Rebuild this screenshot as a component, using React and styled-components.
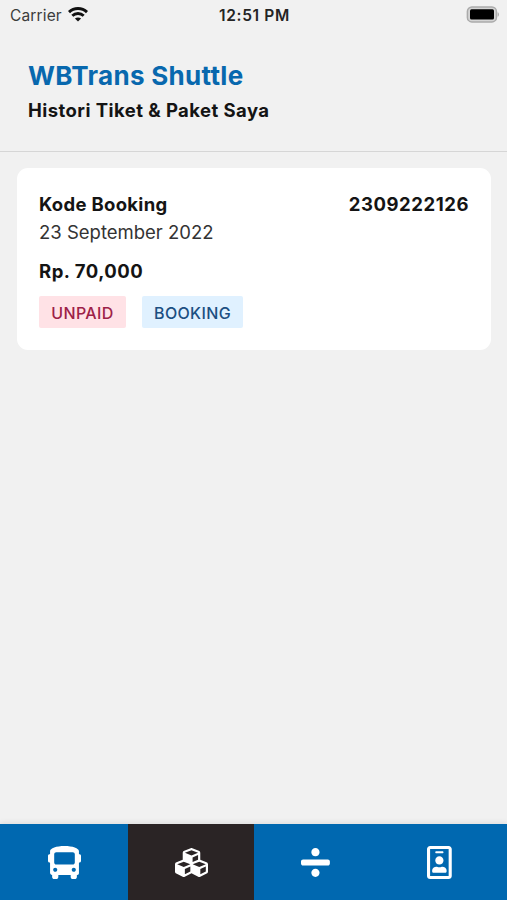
import React from "react";
import styled, { createGlobalStyle } from "styled-components";
import { FaBus, FaCubes, FaDivide, FaRegIdBadge } from "react-icons/fa";

const GlobalStyle = createGlobalStyle`
  * { box-sizing: border-box; }
  body {
    margin: 0;
    background: #f1f1f1;
    font-family: Inter, "Liberation Sans", sans-serif;
    color: #141414;
  }
`;

const Screen = styled.div`
  width: 100%;
  height: 100vh;
  display: flex;
  flex-direction: column;
  overflow: hidden;
`;

const StatusBar = styled.div`
  height: 29px;
  padding: 0 8px 0 10px;
  display: grid;
  grid-template-columns: 1fr auto 1fr;
  align-items: center;
  white-space: nowrap;
`;

const Carrier = styled.div`
  display: flex;
  align-items: center;
  gap: 6px;
  font-size: 15.5px;
  letter-spacing: 0.15px;
  color: #3c3c3c;
`;

const CarrierName = styled.span`
  padding-top: 2px;
`;

const Clock = styled.div`
  padding-top: 2px;
  font-size: 15.5px;
  font-weight: 600;
  letter-spacing: 0.65px;
  color: #242424;
`;

const BatterySlot = styled.div`
  display: flex;
  justify-content: flex-end;
`;

const Header = styled.header`
  height: 123px;
  padding: 30px 28px 0;
  border-bottom: 1px solid #d6d6d6;
`;

const Title = styled.h1`
  margin: 0;
  font-size: 26px;
  line-height: 34px;
  font-weight: 700;
  letter-spacing: 0.3px;
  color: #0868ae;
`;

const Subtitle = styled.h2`
  margin: 0;
  font-size: 18.5px;
  line-height: 34px;
  font-weight: 650;
  letter-spacing: 0.44px;
`;

const Content = styled.main`
  flex: 1;
  padding: 16px 16px 0 17px;
`;

const Card = styled.article`
  height: 182px;
  padding: 22px 22px 0;
  background: #fff;
  border-radius: 11px;
`;

const Row = styled.div`
  display: flex;
  justify-content: space-between;
`;

const Strong = styled.div`
  font-size: 18.5px;
  line-height: 28px;
  font-weight: 650;
  letter-spacing: ${(p) => p.$tracking || 0}px;
`;

const DateText = styled.div`
  font-size: 18.5px;
  line-height: 28px;
  margin-bottom: 11px;
  color: #333;
`;

const Tags = styled.div`
  display: flex;
  gap: 16px;
  margin-top: 11px;
`;

const Tag = styled.span`
  width: ${(p) => p.$width}px;
  height: 32px;
  padding-top: 1px;
  display: flex;
  align-items: center;
  justify-content: center;
  border-radius: 2px;
  font-size: 16px;
  font-weight: 500;
  letter-spacing: 0.35px;
  color: ${(p) => (p.$tone === "danger" ? "#9d2148" : "#1c4f82")};
  background: ${(p) => (p.$tone === "danger" ? "#ffe2e6" : "#e0f1ff")};
`;

const TabBar = styled.nav`
  height: 76px;
  display: grid;
  grid-template-columns: 128px 126px 126px 1fr;
  background: #0068b0;
  box-shadow: 0 -2px 5px rgba(0, 0, 0, 0.07);
`;

const Tab = styled.button`
  display: flex;
  align-items: center;
  justify-content: center;
  border: 0;
  padding: 1px 0 0;
  color: #fff;
  background: ${(p) => (p.$active ? "#2a2425" : "transparent")};
`;

function WifiIcon() {
  return (
    <svg width="20" height="15" viewBox="0 0 20 15" fill="none" stroke="#111" strokeWidth="2.9">
      <path d="M1 5.1C6 .3 14 .3 19 5.1" />
      <path d="M4.3 8.8c3.2-3 8.2-3 11.4 0" />
      <path d="M10 14.6 6.9 11.5c1.7-1.5 4.5-1.5 6.2 0Z" fill="#111" stroke="none" />
    </svg>
  );
}

function BatteryIcon() {
  return (
    <svg width="33" height="17" viewBox="0 0 33 17">
      <rect x="1.4" y="0.9" width="29" height="15" rx="4.5" fill="#d4d4d4" stroke="#aaa" strokeWidth="1.5" />
      <rect x="4" y="3.2" width="24" height="10.3" rx="1.5" fill="#000" />
      <path d="M31.6 6.2c1.8.7 1.8 3.8 0 4.5Z" fill="#aaa" />
    </svg>
  );
}

const tabs = [
  { label: "Shuttle", Icon: FaBus },
  { label: "Histori", Icon: FaCubes, active: true },
  { label: "Pembagian", Icon: FaDivide },
  { label: "Profil", Icon: FaRegIdBadge },
];

export default function App() {
  return (
    <Screen>
      <GlobalStyle />
      <StatusBar>
        <Carrier>
          <CarrierName>Carrier</CarrierName>
          <WifiIcon />
        </Carrier>
        <Clock>12:51 PM</Clock>
        <BatterySlot>
          <BatteryIcon />
        </BatterySlot>
      </StatusBar>
      <Header>
        <Title>WBTrans Shuttle</Title>
        <Subtitle>Histori Tiket &amp; Paket Saya</Subtitle>
      </Header>
      <Content>
        <Card>
          <Row>
            <Strong $tracking={0.3}>Kode Booking</Strong>
            <Strong $tracking={0.55}>2309222126</Strong>
          </Row>
          <DateText>23 September 2022</DateText>
          <Strong $tracking={0.5}>Rp. 70,000</Strong>
          <Tags>
            <Tag $tone="danger" $width={87}>UNPAID</Tag>
            <Tag $tone="info" $width={101}>BOOKING</Tag>
          </Tags>
        </Card>
      </Content>
      <TabBar>
        {tabs.map(({ label, Icon, active }) => (
          <Tab key={label} aria-label={label} $active={active}>
            <Icon size={33} preserveAspectRatio="xMinYMid meet" />
          </Tab>
        ))}
      </TabBar>
    </Screen>
  );
}
